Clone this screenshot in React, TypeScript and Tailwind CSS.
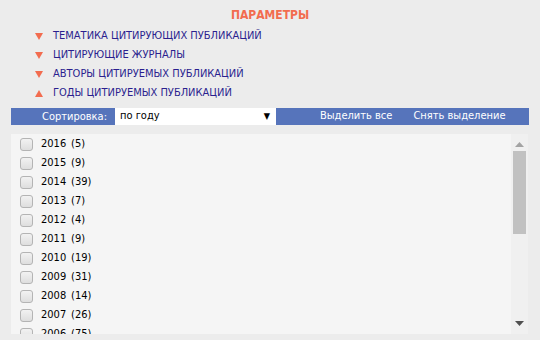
import React from 'react';

const sections = [
  { label: 'ТЕМАТИКА ЦИТИРУЮЩИХ ПУБЛИКАЦИЙ', open: false },
  { label: 'ЦИТИРУЮЩИЕ ЖУРНАЛЫ', open: false },
  { label: 'АВТОРЫ ЦИТИРУЕМЫХ ПУБЛИКАЦИЙ', open: false },
  { label: 'ГОДЫ ЦИТИРУЕМЫХ ПУБЛИКАЦИЙ', open: true },
];

const years: [string, number][] = [
  ['2016', 5],
  ['2015', 9],
  ['2014', 39],
  ['2013', 7],
  ['2012', 4],
  ['2011', 9],
  ['2010', 19],
  ['2009', 31],
  ['2008', 14],
  ['2007', 26],
  ['2006', 75],
];

function Arrow({ up }: { up: boolean }) {
  return (
    <svg width="8" height="7" viewBox="0 0 8 7" className="shrink-0">
      {up ? <path d="M4 0 L8 7 L0 7 Z" fill="#f26c4f" /> : <path d="M0 0 L8 0 L4 7 Z" fill="#f26c4f" />}
    </svg>
  );
}

export default function App() {
  return (
    <div
      className="w-[540px] h-[340px] overflow-hidden bg-[#ececec] text-[11px]"
      style={{ fontFamily: '"DejaVu Sans Condensed", "DejaVu Sans", sans-serif' }}
    >
      <div className="h-[27px] pt-[6px] text-center font-bold text-[12px] text-[#f26c4f]">ПАРАМЕТРЫ</div>

      <ul className="pl-[35px]">
        {sections.map((s) => (
          <li key={s.label} className="h-[19px] flex items-center gap-[10px] text-[#2b1f8f]">
            <Arrow up={s.open} />
            <span>{s.label}</span>
          </li>
        ))}
      </ul>

      <div className="mx-[11px] mt-[5px] h-[17px] flex bg-[#5674bb] text-white">
        <div className="w-[104px] pr-[8px] text-right leading-[17px]">Сортировка:</div>
        <div className="w-[161px] bg-white text-black flex items-center justify-between pl-[5px] pr-[6px]">
          <span>по году</span>
          <span className="text-[9px]">▼</span>
        </div>
        <div className="flex-1 flex items-center gap-[21px] pl-[44px]">
          <span>Выделить все</span>
          <span>Снять выделение</span>
        </div>
      </div>

      <div className="mx-[11px] mt-[9px] w-[517px] h-[200px] flex bg-[#f5f5f5] overflow-hidden">
        <ul className="flex-1 pt-[1px]">
          {years.map(([y, n]) => (
            <li key={y} className="h-[19px] flex items-center pl-[9px] text-black">
              <span className="w-[13px] h-[13px] rounded-[3px] border border-[#b4b4b4] bg-gradient-to-b from-[#f2f2f2] to-[#dedede] shrink-0" />
              <span className="ml-[8px] w-[30px]">{y}</span>
              <span>({n})</span>
            </li>
          ))}
        </ul>
        <div className="w-[17px] bg-[#f0f0f0] flex flex-col items-center">
          <svg width="9" height="5" viewBox="0 0 9 5" className="mt-[8px]">
            <path d="M4.5 0 L9 5 L0 5 Z" fill="#a3a3a3" />
          </svg>
          <div className="mt-[4px] w-[13px] h-[83px] bg-[#c1c1c1]" />
          <div className="flex-1" />
          <svg width="9" height="5" viewBox="0 0 9 5" className="mb-[8px]">
            <path d="M0 0 L9 0 L4.5 5 Z" fill="#505050" />
          </svg>
        </div>
      </div>
    </div>
  );
}
